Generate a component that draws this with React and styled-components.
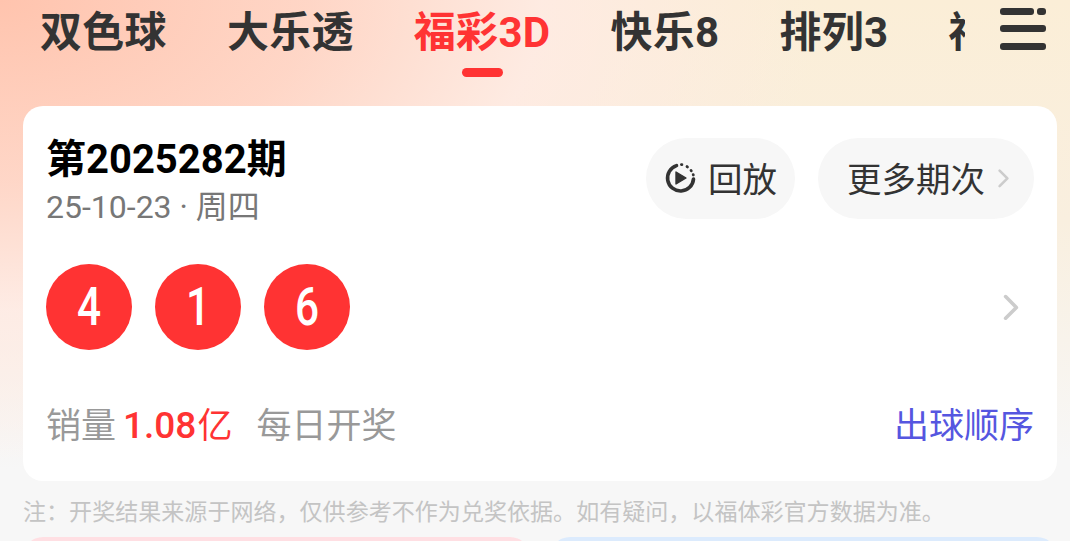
import styled, { createGlobalStyle } from "styled-components";

const COLORS = {
  red: "#ff3333",
  ink: "#333333",
  grey: "#999999",
  page: "#f7f7f7",
};

const CJK = `"Noto Sans CJK SC", sans-serif`;
const LATIN = `Roboto, "Noto Sans CJK SC", sans-serif`;

const GlobalStyle = createGlobalStyle`
  html, body {
    margin: 0;
    height: 100%;
    overflow: hidden;
    background: ${COLORS.page};
  }
  * {
    box-sizing: border-box;
  }
`;

const Page = styled.div`
  width: 1070px;
  height: 541px;
  overflow: hidden;
  font-family: ${LATIN};
  background-image:
    radial-gradient(
      ellipse 820px 470px at 0 0,
      #ffc4ae 0%,
      rgba(255, 212, 197, 0.92) 38%,
      rgba(255, 234, 228, 0.8) 66%,
      rgba(255, 243, 241, 0) 100%
    ),
    linear-gradient(to bottom, #fbeed7 0%, #f9efdf 220px, ${COLORS.page} 460px);
`;

const TabBar = styled.div`
  display: flex;
  height: 106px;
`;

const TabScroller = styled.div`
  width: 965px;
  display: flex;
  gap: 60px;
  padding: 2px 0 0 40px;
  overflow: hidden;
`;

const Tab = styled.div`
  flex: none;
  display: flex;
  flex-direction: column;
  align-items: center;
  font-size: 42px;
  line-height: 62px;
  font-weight: 700;
  color: ${(props) => (props.$active ? COLORS.red : COLORS.ink)};
  letter-spacing: 0.3px;
`;

const TabMark = styled.span`
  width: 41px;
  height: 9px;
  margin-top: 4px;
  border-radius: 5px;
  background: ${COLORS.red};
`;

const MenuButton = styled.div`
  padding: 8px 0 0 35px;
`;

const Card = styled.div`
  margin: 0 13px 0 23px;
  height: 375px;
  padding: 32px 23px 0;
  border-radius: 20px;
  background: #fff;
`;

const CardHead = styled.div`
  display: flex;
  justify-content: space-between;
  height: 81px;
`;

const IssueTitle = styled.div`
  margin-top: 1px;
  font-size: 40px;
  line-height: 42px;
  font-weight: 700;
  color: #000;
`;

const IssueDate = styled.div`
  margin-top: 6px;
  font-size: 32px;
  line-height: 40px;
  color: #777;
`;

const HeadActions = styled.div`
  display: flex;
  gap: 23px;
`;

const Pill = styled.div`
  display: flex;
  align-items: center;
  height: 81px;
  padding: 0 ${(props) => props.$right}px 4px ${(props) => props.$left}px;
  border-radius: 41px;
  background: #f7f7f7;
  font-family: ${CJK};
  font-size: 34.5px;
  color: ${COLORS.ink};
`;

const ReplayIcon = styled.svg`
  width: 32px;
  height: 32px;
  margin: 2px 12px 0 0;
`;

const Balls = styled.div`
  display: flex;
  align-items: center;
  justify-content: space-between;
  margin-top: 45px;
`;

const BallGroup = styled.div`
  display: flex;
  gap: 23px;
`;

const Ball = styled.div`
  width: 86px;
  height: 86px;
  border-radius: 50%;
  display: flex;
  align-items: center;
  justify-content: center;
  background: ${COLORS.red};
  color: #fff;
  font-size: 53px;
`;

// the digits in the reference are a narrow DIN style face
const BallDigit = styled.span`
  display: inline-block;
  transform: scaleX(0.8);
  font-weight: 500;
`;

const Chevron = styled.svg`
  flex: none;
  width: ${(props) => props.$size}px;
  height: ${(props) => props.$size * 1.6}px;
  margin: ${(props) => props.$margin};
`;

const CardFoot = styled.div`
  display: flex;
  justify-content: space-between;
  align-items: center;
  height: 40px;
  margin-top: 52px;
  font-size: 35px;
`;

const SaleInfo = styled.div`
  display: flex;
  align-items: baseline;
  color: ${COLORS.grey};
  font-family: ${CJK};
`;

const SaleAmount = styled.span`
  margin: 0 24px 0 7px;
  color: ${COLORS.red};
  font-family: ${LATIN};
  font-weight: 500;
  font-size: 37px;
`;

const SaleUnit = styled.span`
  margin-left: 1px;
  font-family: ${CJK};
  font-weight: 400;
  font-size: 35px;
`;

const OrderLink = styled.div`
  color: #5556e0;
  font-family: ${CJK};
`;

const Note = styled.div`
  height: 56px;
  padding: 16px 0 0 23px;
  font-family: ${CJK};
  font-size: 23.05px;
  line-height: 26px;
  color: #c4c4c4;
  white-space: nowrap;
`;

const Promos = styled.div`
  display: grid;
  grid-template-columns: 1fr 1fr;
  gap: 20px;
  margin: 0 13px 0 23px;
`;

const Promo = styled.div`
  height: 100px;
  border-radius: 20px;
  background: ${(props) => props.$bg};
`;

const TABS = ["双色球", "大乐透", "福彩3D", "快乐8", "排列3", "福彩"];
const NOTE_TEXT = "注\uFF1A开奖结果来源于网络\uFF0C仅供参考不作为兑奖依据\u3002如有疑问\uFF0C以福体彩官方数据为准\u3002";

function Arrow({ size, color, margin }) {
  return (
    <Chevron $size={size} $margin={margin} viewBox="0 0 10 16">
      <path d="M2 2l6 6-6 6" fill="none" stroke={color} strokeWidth="2" strokeLinecap="round" strokeLinejoin="round" />
    </Chevron>
  );
}

export default function App() {
  return (
    <Page>
      <GlobalStyle />
      <TabBar>
        <TabScroller>
          {TABS.map((name) => (
            <Tab key={name} $active={name === "福彩3D"}>
              {name}
              {name === "福彩3D" && <TabMark />}
            </Tab>
          ))}
        </TabScroller>
        <MenuButton>
          <svg width="46" height="42" viewBox="0 0 46 42">
            <g fill="#333">
              <rect x="0" y="0" width="34" height="7" rx="3" />
              <rect x="37" y="0" width="9" height="7" rx="3" />
              <rect x="0" y="17" width="46" height="7" rx="3" />
              <rect x="0" y="35" width="46" height="7" rx="3" />
            </g>
          </svg>
        </MenuButton>
      </TabBar>

      <Card>
        <CardHead>
          <div>
            <IssueTitle>第2025282期</IssueTitle>
            <IssueDate>25-10-23 · 周四</IssueDate>
          </div>
          <HeadActions>
            <Pill $left={18} $right={18}>
              <ReplayIcon viewBox="0 0 32 32">
                <path d="M12.5 3.6A13 13 0 1 0 29.5 17" fill="none" stroke="#333" strokeWidth="3.6" strokeLinecap="round" />
                <path d="M17.4 2.6l.5.1M23 4.6l.5.4M27 8.4l.3.5M29.2 12.6l.1.4" fill="none" stroke="#333" strokeWidth="2.8" strokeLinecap="round" />
                <path d="M12 10l10 6-10 6z" fill="#333" stroke="#333" strokeWidth="1.4" strokeLinejoin="round" />
              </ReplayIcon>
              回放
            </Pill>
            <Pill $left={29} $right={24}>
              更多期次
              <Arrow size={13} color="#cccccc" margin="4px 0 0 12px" />
            </Pill>
          </HeadActions>
        </CardHead>

        <Balls>
          <BallGroup>
            <Ball><BallDigit>4</BallDigit></Ball>
            <Ball><BallDigit>1</BallDigit></Ball>
            <Ball><BallDigit>6</BallDigit></Ball>
          </BallGroup>
          <Arrow size={18} color="#cccccc" margin="0 14px 0 0" />
        </Balls>

        <CardFoot>
          <SaleInfo>
            销量
            <SaleAmount>
              1.08<SaleUnit>亿</SaleUnit>
            </SaleAmount>
            每日开奖
          </SaleInfo>
          <OrderLink>出球顺序</OrderLink>
        </CardFoot>
      </Card>

      <Note>{NOTE_TEXT}</Note>

      <Promos>
        <Promo $bg="#ffdfe3" />
        <Promo $bg="#dcebfd" />
      </Promos>
    </Page>
  );
}
